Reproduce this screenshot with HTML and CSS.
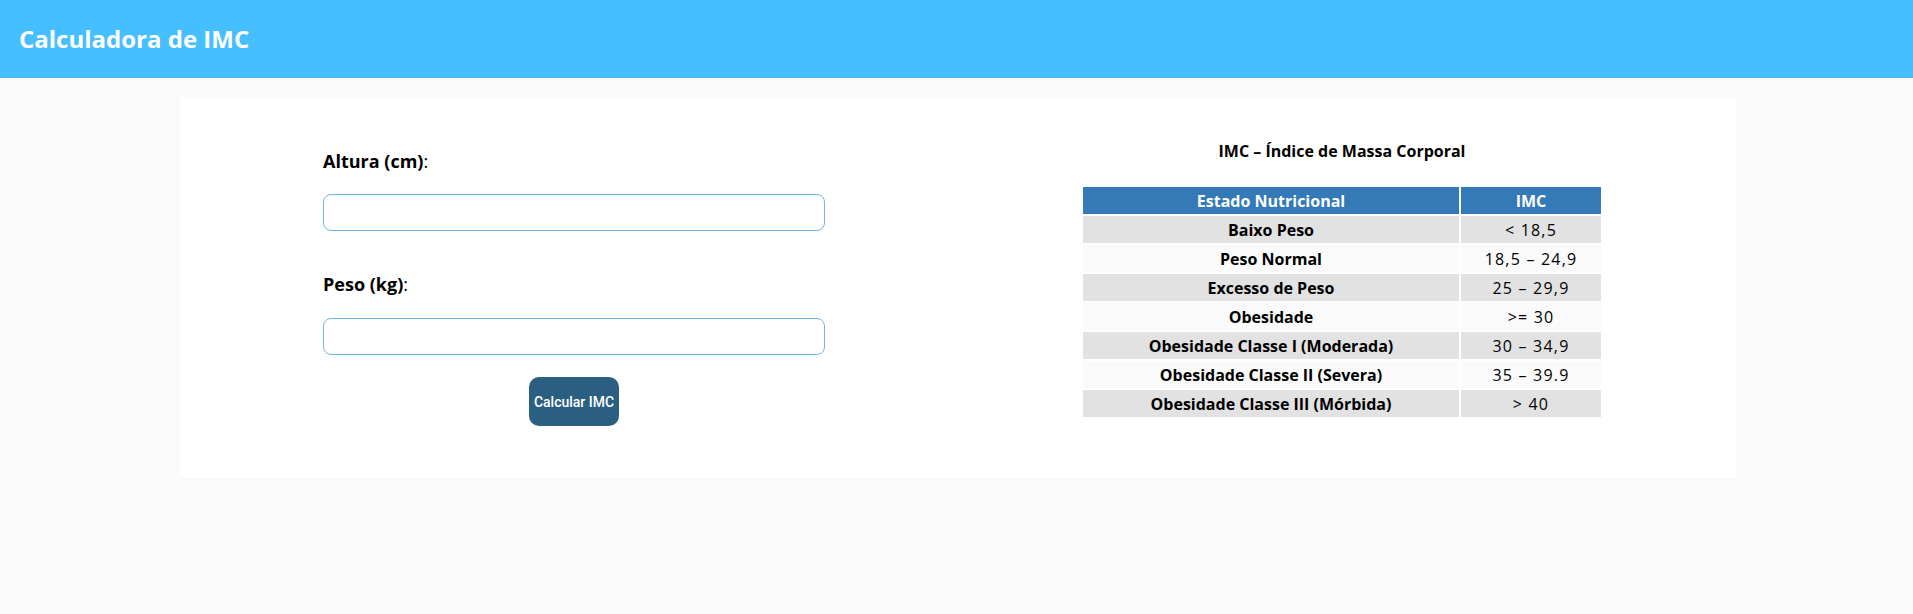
FILE: index.html
```html
<!DOCTYPE html>
<html lang="pt">
<head>
<meta charset="utf-8">
<title>Calculadora de IMC</title>
<link rel="stylesheet" href="styles.css">
</head>
<body>
<header class="topbar">
  <h1 class="brand">Calculadora de IMC</h1>
</header>
<main class="card">
  <section class="form-col">
    <label class="field-label" for="altura"><b>Altura (cm)</b>:</label>
    <input class="field-input" id="altura" type="text">
    <label class="field-label second" for="peso"><b>Peso (kg)</b>:</label>
    <input class="field-input" id="peso" type="text">
    <div class="btn-row"><button class="btn" type="button">Calcular IMC</button></div>
  </section>
  <section class="table-col">
    <h2 class="table-title">IMC – Índice de Massa Corporal</h2>
    <table class="imc-table">
      <thead>
        <tr><th class="c1">Estado Nutricional</th><th class="c2">IMC</th></tr>
      </thead>
      <tbody>
        <tr><td class="c1">Baixo Peso</td><td class="c2">&lt; 18,5</td></tr>
        <tr><td class="c1">Peso Normal</td><td class="c2">18,5 – 24,9</td></tr>
        <tr><td class="c1">Excesso de Peso</td><td class="c2">25 – 29,9</td></tr>
        <tr><td class="c1">Obesidade</td><td class="c2">&gt;= 30</td></tr>
        <tr><td class="c1">Obesidade Classe I (Moderada)</td><td class="c2">30 – 34,9</td></tr>
        <tr><td class="c1">Obesidade Classe II (Severa)</td><td class="c2">35 – 39.9</td></tr>
        <tr><td class="c1">Obesidade Classe III (Mórbida)</td><td class="c2">&gt; 40</td></tr>
      </tbody>
    </table>
  </section>
</main>
</body>
</html>
```

FILE: styles.css
```css
* { box-sizing: border-box; }
html, body { margin: 0; padding: 0; }
body {
  background: #fafafa;
  font-family: "Open Sans", "DejaVu Sans", sans-serif;
  color: #000;
}
.topbar {
  height: 78px;
  background: #45bfff;
  display: flex;
  align-items: center;
  padding-left: 19px;
}
.brand {
  margin: 0;
  color: #fff;
  font-size: 24px;
  font-weight: 700;
  line-height: 30px;
}
.card {
  margin: 19px 177px 0 180px;
  height: 380px;
  background: #fff;
  display: flex;
  align-items: flex-start;
  padding-left: 143px;
  gap: 256px;
}
.form-col {
  width: 502px;
  padding-top: 52px;
  display: flex;
  flex-direction: column;
}
.field-label {
  display: block;
  font-size: 18px;
  line-height: 24px;
  font-weight: 400;
  margin-bottom: 21px;
}
.field-label b { font-weight: 700; }
.field-label.second { margin-top: 41px; margin-bottom: 22px; }
.field-input {
  display: block;
  width: 502px;
  height: 37px;
  border: 1px solid #6cb9e2;
  border-radius: 8px;
  background: #fff;
  outline: none;
  font: inherit;
  padding: 0 10px;
}
.btn-row {
  display: flex;
  justify-content: center;
  margin-top: 22px;
}
.btn {
  width: 90px;
  height: 49px;
  border: none;
  border-radius: 10px;
  background: #2b5f82;
  color: #fff;
  font-family: Roboto, "Liberation Sans", sans-serif;
  font-size: 14px;
  font-weight: 500;
  padding: 0;
}
.table-col {
  padding-top: 44px;
  display: flex;
  flex-direction: column;
  align-items: center;
}
.table-title {
  margin: 0 0 23px;
  font-size: 16px;
  line-height: 21px;
  font-weight: 700;
}
.imc-table {
  border-collapse: separate;
  border-spacing: 2px;
  font-size: 16px;
}
.imc-table th,
.imc-table td {
  height: 27px;
  padding: 0;
  text-align: center;
  vertical-align: middle;
}
.imc-table th {
  background: #337ab7;
  color: #fff;
  font-weight: 700;
}
.imc-table .c1 { width: 376px; }
.imc-table .c2 { width: 140px; }
.imc-table td.c1 { font-weight: 700; }
.imc-table td.c2 { letter-spacing: 1.2px; }
.imc-table tbody tr:nth-child(odd) td { background: #e2e2e2; }
.imc-table tbody tr:nth-child(even) td { background: #fafafa; }
```
